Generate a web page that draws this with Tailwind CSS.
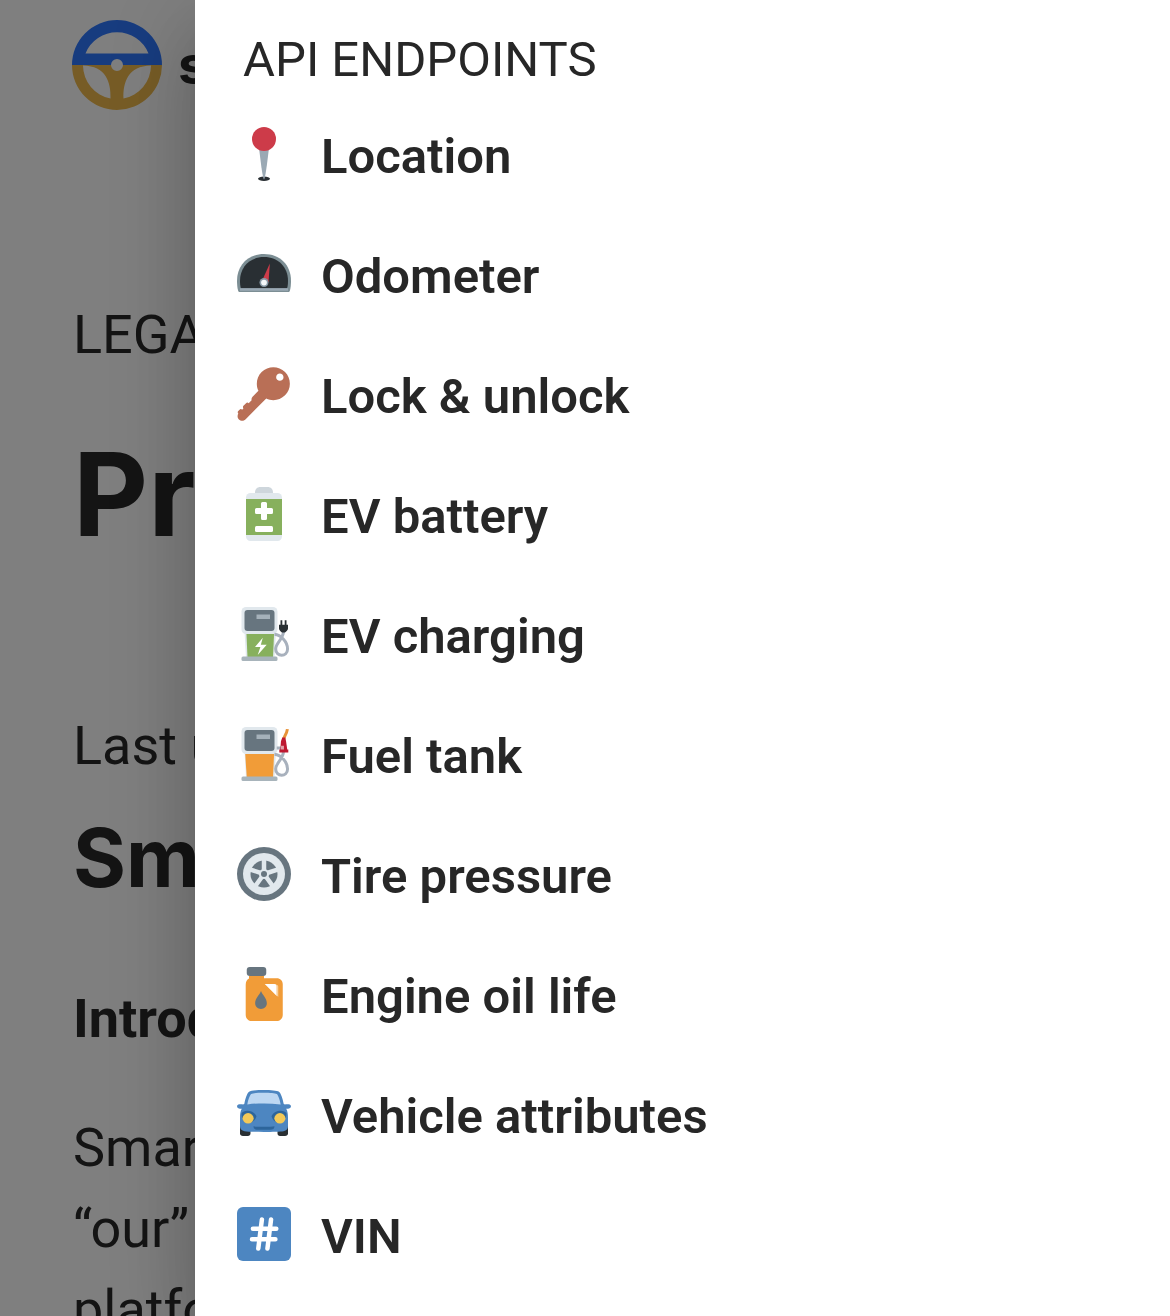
<!DOCTYPE html>
<html lang="en">
<head>
    <meta charset="UTF-8">
    <meta name="viewport" content="width=device-width, initial-scale=1.0">
    <title>Smartcar - Privacy Policy</title>
    <script src="https://cdn.jsdelivr.net/npm/@tailwindcss/browser@4"></script>
</head>
<body class="h-screen overflow-hidden bg-white text-[#282828] font-['Roboto',sans-serif]">

    <!-- Page -->
    <div class="h-screen overflow-hidden px-[73px]">
        <header class="-ml-px flex items-center gap-4 pt-5">
            <svg class="size-[90px] shrink-0" viewBox="0 0 90 90" aria-hidden="true">
                <path fill="#2f78ff" fill-rule="evenodd" d="M0 45a45 45 0 0 1 90 0H51a6 6 0 0 0-12 0zM13.5 33.500h63a34 34 0 0 0-63 0z"/>
                <path fill="#eeb94c" fill-rule="evenodd" d="M0 45h39a6 6 0 0 0 12 0h39a45 45 0 0 1-90 0zM11 45.500a34 34 0 0 0 27.500 33C39 62 34 46 11 45.500zM79 45.500a34 34 0 0 1-27.500 33C51 62 56 46 79 45.500z"/>
            </svg>
            <span class="font-['Inter',sans-serif] text-[54px] font-bold leading-none">smartcar</span>
        </header>

        <main class="whitespace-nowrap pt-[184px]">
            <p class="text-[54px] leading-[81px]">LEGAL</p>
            <h1 class="mt-[59px] font-['Inter',sans-serif] text-[116px] font-bold leading-[120px]">Privacy Policy</h1>
            <p class="mt-[151px] text-[54px] leading-[81px]">Last updated</p>
            <h2 class="mt-6 font-['Inter',sans-serif] text-[81px] font-bold leading-[96px]">Smartcar</h2>
            <h3 class="mt-[72px] text-[54px] font-bold leading-[81px]">Introduction</h3>
            <p class="mt-12 text-[54px] leading-[81px]">Smartcar, Inc. (“we,” “us,”<br>“our” operates the Smartcar<br>platform</p>
        </main>
    </div>

    <!-- Backdrop -->
    <div class="fixed inset-0 bg-black/50"></div>

    <!-- Menu drawer -->
    <nav class="fixed inset-y-0 right-0 left-1/6 bg-white text-[49px] text-[#272727] shadow-[0_24px_30px_-15px_rgba(0,0,0,0.2),0_48px_72px_6px_rgba(0,0,0,0.14),0_18px_90px_15px_rgba(0,0,0,0.12)]" aria-labelledby="menu-title">
        <h2 id="menu-title" class="pt-[26px] pl-12 leading-[68px]">API ENDPOINTS</h2>
        <ul class="font-semibold">
            <li>
                <a href="#location" class="flex h-[120px] items-center gap-[30px] pl-[42px]">
                    <svg class="size-[54px] shrink-0" viewBox="0 0 36 36" aria-hidden="true">
                        <ellipse fill="#292f33" cx="18" cy="34.500" rx="4" ry="1.500"/>
                        <path fill="#9aa9b4" d="M14.339 10.725S16.894 34.998 18.001 35c1.106.001 3.660-24.275 3.660-24.275z"/>
                        <circle fill="#cd3b49" cx="18" cy="8" r="8"/>
                    </svg>
                    <span class="pt-1.5">Location</span>
                </a>
            </li>
            <li>
                <a href="#odometer" class="flex h-[120px] items-center gap-[30px] pl-[42px]">
                    <svg class="size-[54px] shrink-0" viewBox="0 0 36 36" aria-hidden="true">
                        <path fill="#7c8e94" d="M0 22.500C0 12 7.500 4.700 18 4.700S36 12 36 22.500c0 2.300-.2 4.700-.7 6.500-.2.700-.6 1-1.300 1H2c-.7 0-1.100-.3-1.300-1C.2 27.200 0 24.800 0 22.500z"/>
                        <path fill="#292f33" d="M2 22.500C2 13.500 8.500 6.700 18 6.700s16 6.800 16 15.800c0 2-.2 3.700-.6 5H2.600C2.200 26.200 2 24.500 2 22.500z"/>
                        <path fill="#9aa9b4" d="M2 27.500h32v1.700H2z"/>
                        <path fill="#cd3b49" d="M21.900 11l-.9 12.500-4.300-1z"/>
                        <circle fill="#8899a6" cx="18" cy="23.700" r="3"/>
                        <circle fill="#f5f8fa" cx="18" cy="23.700" r="1.900"/>
                    </svg>
                    <span class="pt-1.5">Odometer</span>
                </a>
            </li>
            <li>
                <a href="#lock" class="flex h-[120px] items-center gap-[30px] pl-[42px]">
                    <svg class="size-[54px] shrink-0" viewBox="0 0 36 36" aria-hidden="true">
                        <path fill="#b96f56" transform="translate(-.6 -.1)" d="M32.614 3.414C28.310-.89 21.332-.89 17.027 3.414c-3.391 3.392-4.098 8.439-2.144 12.535l-3.916 3.915c-.64.641-.841 1.543-.625 2.359l-1.973 1.972c-.479-.48-1.252-.48-1.731 0l-1.731 1.732c-.479.479-.479 1.253 0 1.732l-.867.864c-.479-.478-1.253-.478-1.731 0l-.866.867c-.479.479-.479 1.253 0 1.732.015.016.036.020.051.033-.794 1.189-.668 2.812.382 3.863 1.195 1.195 3.134 1.195 4.329 0L20.080 21.144c4.097 1.955 9.144 1.247 12.535-2.146 4.302-4.302 4.302-11.280-.001-15.584zm-1.731 5.195c-.957.957-2.509.957-3.464 0-.956-.956-.956-2.507 0-3.464.955-.956 2.507-.956 3.464 0 .956.957.956 2.508 0 3.464z"/>
                    </svg>
                    <span class="pt-1.5">Lock &amp; unlock</span>
                </a>
            </li>
            <li>
                <a href="#ev-battery" class="flex h-[120px] items-center gap-[30px] pl-[42px]">
                    <svg class="size-[54px] shrink-0" viewBox="0 0 36 36" aria-hidden="true">
                        <path fill="#ced6dc" d="M12 5V3.500C12 1.500 13.500 0 15.500 0h5C22.500 0 24 1.500 24 3.500V5z"/>
                        <rect fill="#e1e8ed" x="6" y="4" width="24" height="32" rx="3"/>
                        <path fill="#87b05d" d="M6 8h24v24H6z"/>
                        <path fill="#fff" d="M17 10h2a1 1 0 0 1 1 1v3h3a1 1 0 0 1 1 1v2a1 1 0 0 1-1 1h-3v3a1 1 0 0 1-1 1h-2a1 1 0 0 1-1-1v-3h-3a1 1 0 0 1-1-1v-2a1 1 0 0 1 1-1h3v-3a1 1 0 0 1 1-1z"/>
                        <rect fill="#fff" x="12" y="26" width="12" height="4" rx="1"/>
                    </svg>
                    <span class="pt-1.5">EV battery</span>
                </a>
            </li>
            <li>
                <a href="#ev-charging" class="flex h-[120px] items-center gap-[30px] pl-[42px]">
                    <svg class="size-[54px] shrink-0" viewBox="0 0 36 36" aria-hidden="true">
                        <rect fill="#e1e8ed" x="3" y="0" width="24" height="18" rx="3"/>
                        <path fill="#e1e8ed" d="M5 16h21l-1 18H6z"/>
                        <rect fill="#67757f" x="5" y="2" width="20" height="14" rx="2"/>
                        <path fill="#a5b1ba" d="M13 5h9v3h-9z"/>
                        <path fill="#87b05d" d="M6.300 18h18.400L24 33.500H7z"/>
                        <path fill="#fff" d="M17.200 20.500L12 26.700h3.600L13.800 32l6-6.800h-3.900z"/>
                        <rect fill="#a8b4bb" x="3" y="33" width="24" height="3" rx="1"/>
                        <path fill="none" stroke="#a8b1bd" stroke-width="2" d="M25 18.200C29 18.500 33.700 23 33.700 28c0 5.500-7.900 5.500-7.900 0C25.800 24 31 21.500 31 16"/>
                        <path fill="#292f33" d="M29 8.800h1.200v3h1.600v-3H33v3h1v2.600c0 1.200-1.200 2-2 2.600h-2c-.8-.6-2-1.400-2-2.600v-2.600h1z"/>
                    </svg>
                    <span class="pt-1.5">EV charging</span>
                </a>
            </li>
            <li>
                <a href="#fuel-tank" class="flex h-[120px] items-center gap-[30px] pl-[42px]">
                    <svg class="size-[54px] shrink-0" viewBox="0 0 36 36" aria-hidden="true">
                        <rect fill="#e1e8ed" x="3" y="0" width="24" height="18" rx="3"/>
                        <path fill="#e1e8ed" d="M5 16h21l-1 18H6z"/>
                        <rect fill="#67757f" x="5" y="2" width="20" height="14" rx="2"/>
                        <path fill="#a5b1ba" d="M13 5h9v3h-9z"/>
                        <path fill="#f19c38" d="M5.500 18h19.200L24 33.500H6.500z"/>
                        <rect fill="#a8b4bb" x="3" y="33" width="24" height="3" rx="1"/>
                        <path fill="none" stroke="#a8b1bd" stroke-width="2" d="M25 18.200C29 18.500 33.700 23 33.700 28c0 5.500-7.900 5.500-7.900 0C25.800 24 31 21.500 31 16M31 14h-4.500"/>
                        <path fill="none" stroke="#e8943a" stroke-width="2" d="M31 9c0-3 2-3.500 2.600-7.600"/>
                        <path fill="#be1931" d="M29.300 9.500l.9-2.500h2l.5 2.500.8 5.500h.7v2h-6v-2h.7z"/>
                        <path fill="#e1a0a8" d="M29.300 12.500h2V15h-2z"/>
                    </svg>
                    <span class="pt-1.5">Fuel tank</span>
                </a>
            </li>
            <li>
                <a href="#tire-pressure" class="flex h-[120px] items-center gap-[30px] pl-[42px]">
                    <svg class="size-[54px] shrink-0" viewBox="0 0 36 36" aria-hidden="true">
                        <circle fill="#67757f" cx="18" cy="18" r="18"/>
                        <circle fill="#e1e8ed" cx="18" cy="18" r="14"/>
                        <circle fill="#67757f" cx="18" cy="18" r="9"/>
                        <path stroke="#e1e8ed" stroke-width="3" d="M18 18V8M18 18l9.510-3.090M18 18l5.880 8.090M18 18l-5.880 8.090M18 18l-9.510-3.090"/>
                        <circle fill="#e1e8ed" cx="18" cy="18" r="3.400"/>
                        <circle fill="#67757f" cx="18" cy="18" r="2"/>
                    </svg>
                    <span class="pt-1.5">Tire pressure</span>
                </a>
            </li>
            <li>
                <a href="#engine-oil" class="flex h-[120px] items-center gap-[30px] pl-[42px]">
                    <svg class="size-[54px] shrink-0" viewBox="0 0 36 36" aria-hidden="true">
                        <rect fill="#67757f" x="6.500" y="0" width="13" height="6" rx="2"/>
                        <path fill="#f19c38" fill-rule="evenodd" d="M8 6h10v1.500h8.500c2.300 0 4 1.700 4 4V32c0 2.300-1.700 4-4 4H9.800c-2.300 0-4-1.700-4-4V12c0-2 .7-3.500 2.200-4.300zM18.500 11.300l8 8v-6.500c0-1-.5-1.500-1.500-1.500z"/>
                        <path fill="#f8cf9c" d="M26.500 12c.6 0 1 .4 1 1v7l-1-1z"/>
                        <path fill="#67757f" d="M16 16c1 2.700 3.900 4.800 3.900 8.200 0 2.200-1.700 3.800-3.900 3.800s-3.900-1.600-3.900-3.800c0-3.400 2.900-5.500 3.900-8.200z"/>
                    </svg>
                    <span class="pt-1.5">Engine oil life</span>
                </a>
            </li>
            <li>
                <a href="#attributes" class="flex h-[120px] items-center gap-[30px] pl-[42px]">
                    <svg class="size-[54px] shrink-0" viewBox="0 0 36 36" aria-hidden="true">
                        <path fill="#292f33" d="M2 26h7v5c0 1-.7 1.700-1.700 1.700H4C2.800 32.700 2 32 2 31zM27 26h7v5c0 1-.8 1.700-2 1.700h-3.300c-1 0-1.700-.7-1.700-1.700z"/>
                        <path fill="#4d86c1" d="M18 2c4.500 0 8.700.3 10 1.200 1.300 1 2.500 4.800 3.100 8 .3.200.6.400.9.400.8 0 4-.4 4 1.200 0 1.400-1.300 1.700-3.200 1.700.9 1.500 1.200 3.500 1.200 6V26c0 2-1 3-3 3.500-4 .6-22 .6-26 0-2-.5-3-1.500-3-3.500v-5.500c0-2.500.3-4.500 1.200-6C1.300 14.500 0 14.200 0 12.800c0-1.600 3.200-1.200 4-1.200.3 0 .6-.2.900-.4C5.500 8 6.700 4.200 8 3.200 9.300 2.300 13.500 2 18 2z"/>
                        <path fill="#bdd7f2" d="M18 3.800c4 0 7.400.2 8.500.9 1 .8 2.100 4 2.600 6.900-7.400-.9-14.800-.9-22.200 0 .5-2.900 1.600-6.100 2.600-6.900 1.100-.7 4.500-.9 8.500-.9z"/>
                        <path fill="#2d659b" d="M3 17.500c1.500-2.500 8-2.500 10 2-.8 2.500-2.500 4.500-5.500 4.500S3 20.500 3 17.500zM33 17.500c-1.500-2.500-8-2.500-10 2 .8 2.500 2.500 4.500 5.500 4.500s4.500-3.500 4.500-6.500z"/>
                        <path fill="#2d659b" d="M11 26.200c2 .5 12 .5 14 0 0 1.600-1 2.300-3 2.300h-8c-2 0-3-.7-3-2.300z"/>
                        <ellipse fill="#f3c958" cx="7.400" cy="20.900" rx="3.700" ry="3.500"/>
                        <ellipse fill="#f3c958" cx="28.600" cy="20.900" rx="3.700" ry="3.500"/>
                    </svg>
                    <span class="pt-1.5">Vehicle attributes</span>
                </a>
            </li>
            <li>
                <a href="#vin" class="flex h-[120px] items-center gap-[30px] pl-[42px]">
                    <svg class="size-[54px] shrink-0" viewBox="0 0 36 36" aria-hidden="true">
                        <rect fill="#4d86c1" width="36" height="36" rx="4"/>
                        <path fill="none" stroke="#fff" stroke-width="3" stroke-linecap="round" d="M16.600 8.300l-2.400 19.400M22.700 8.300l-2.400 19.400M10.600 14.500h15.600M10 21.500h15.600"/>
                    </svg>
                    <span class="pt-1.5">VIN</span>
                </a>
            </li>
        </ul>
    </nav>

</body>
</html>
